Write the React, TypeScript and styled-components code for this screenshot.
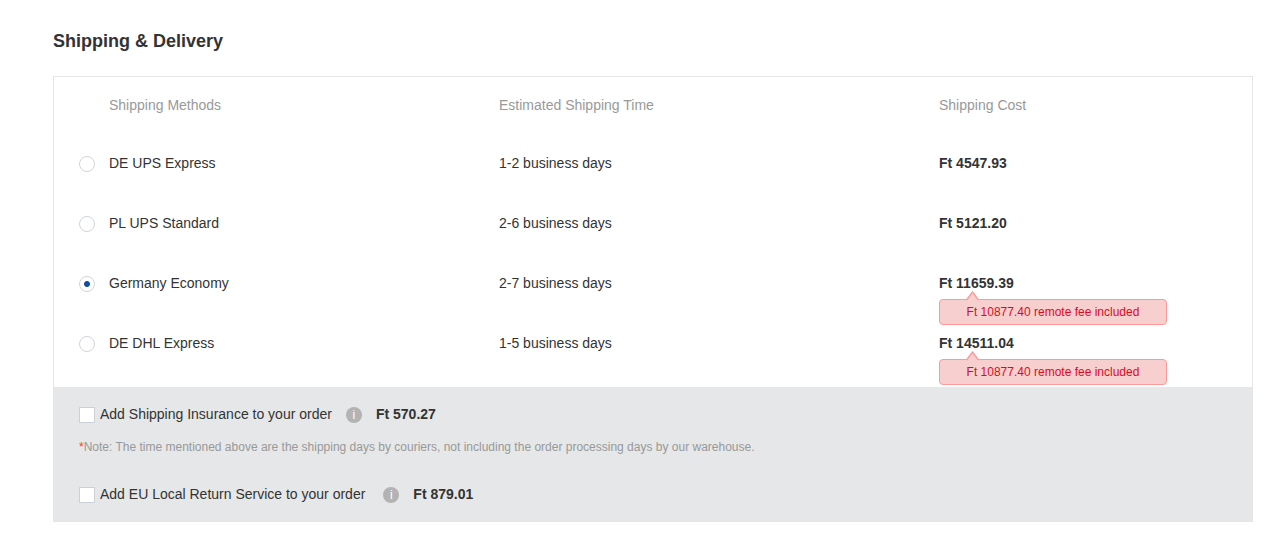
import React, { useState } from 'react';
import styled, { createGlobalStyle } from 'styled-components';

const GlobalStyle = createGlobalStyle`
  *, *::before, *::after { box-sizing: border-box; }
  body {
    margin: 0;
    background: #fff;
    color: #333;
    font: 14px/20px "Liberation Sans", Arial, sans-serif;
  }
`;

const Page = styled.main`
  padding: 30px 28px 18px 53px;
`;

const Title = styled.h2`
  margin: 0 0 24px;
  font-size: 18px;
  line-height: 22px;
  font-weight: bold;
`;

const Panel = styled.section`
  border: 1px solid #e5e6e7;
`;

const Methods = styled.table`
  width: 100%;
  margin-bottom: 14px;
  table-layout: fixed;
  border-collapse: collapse;
`;

const RadioCol = styled.col`
  width: 55px;
`;

const NameCol = styled.col`
  width: 390px;
`;

const TimeCol = styled.col`
  width: 440px;
`;

const HeadCell = styled.th`
  height: 56px;
  padding: 0;
  color: #999;
  font-weight: normal;
  text-align: left;
`;

const Cell = styled.td`
  height: 60px;
  padding: 0;
`;

const RadioCell = styled(Cell)`
  padding: 2px 0 0 25px;
`;

const Radio = styled.input`
  display: block;
  appearance: none;
  width: 16px;
  height: 16px;
  margin: 0;
  border: 1px solid #d0d4da;
  border-radius: 50%;
  background: #fff;

  &:checked {
    background: radial-gradient(circle, #0f50a5 0 2px, #0f50a5 2.5px, #fff 3.5px);
  }
`;

const Cost = styled.div`
  position: relative;
  font-weight: bold;
`;

const FeeNote = styled.div`
  position: absolute;
  z-index: 1;
  top: 26px;
  left: 0;
  width: 228px;
  border: 1px solid #ff9999;
  border-radius: 4px;
  background: #f7cfcf;
  color: #dd0a1e;
  font-size: 12px;
  line-height: 24px;
  font-weight: normal;
  text-align: center;
`;

const FeeArrow = styled.svg`
  position: absolute;
  top: -9px;
  left: 26px;
  display: block;
`;

const Extras = styled.div`
  padding: 17px 25px;
  background: #e5e7e8;
`;

const ExtraRow = styled.div`
  display: flex;
  align-items: center;
`;

const Checkbox = styled.input`
  appearance: none;
  flex: none;
  width: 16px;
  height: 16px;
  margin: 2px 5px 0 0;
  border: 1px solid #ccd0d7;
  background: #fff;

  &:checked {
    background: #0f50a5;
    box-shadow: inset 0 0 0 3px #fff;
  }
`;

const ExtraLabel = styled.label<{ $gap: number }>`
  margin-right: ${({ $gap }) => $gap}px;
`;

const InfoButton = styled.button`
  flex: none;
  width: 16px;
  height: 16px;
  margin: 2px 14px 0 0;
  padding: 0;
  border: 0;
  border-radius: 50%;
  background: #b3b3b3;
  color: #fff;
  font: 12px/16px "Liberation Sans", Arial, sans-serif;
  text-align: center;
`;

const Price = styled.strong`
  font-weight: bold;
`;

const Note = styled.p`
  margin: 13px 0 27px;
  color: #999;
  font-size: 12px;
`;

const Asterisk = styled.span`
  color: #ff3c1e;
`;

interface Method {
  id: string;
  name: string;
  time: string;
  cost: string;
  fee?: string;
}

const methods: Method[] = [
  { id: 'de-ups', name: 'DE UPS Express', time: '1-2 business days', cost: 'Ft 4547.93' },
  { id: 'pl-ups', name: 'PL UPS Standard', time: '2-6 business days', cost: 'Ft 5121.20' },
  { id: 'de-eco', name: 'Germany Economy', time: '2-7 business days', cost: 'Ft 11659.39', fee: 'Ft 10877.40' },
  { id: 'de-dhl', name: 'DE DHL Express', time: '1-5 business days', cost: 'Ft 14511.04', fee: 'Ft 10877.40' },
];

interface ExtraProps {
  id: string;
  label: string;
  price: string;
  gap: number;
}

function Extra({ id, label, price, gap }: ExtraProps) {
  return (
    <ExtraRow>
      <Checkbox type="checkbox" id={id} />
      <ExtraLabel htmlFor={id} $gap={gap}>{label}</ExtraLabel>
      <InfoButton type="button">i</InfoButton>
      <Price>{price}</Price>
    </ExtraRow>
  );
}

export default function App() {
  const [selected, setSelected] = useState('de-eco');

  return (
    <>
      <GlobalStyle />
      <Page>
        <Title>Shipping &amp; Delivery</Title>
        <Panel>
          <Methods>
            <colgroup>
              <RadioCol />
              <NameCol />
              <TimeCol />
              <col />
            </colgroup>
            <thead>
              <tr>
                <HeadCell />
                <HeadCell scope="col">Shipping Methods</HeadCell>
                <HeadCell scope="col">Estimated Shipping Time</HeadCell>
                <HeadCell scope="col">Shipping Cost</HeadCell>
              </tr>
            </thead>
            <tbody>
              {methods.map((m) => (
                <tr key={m.id}>
                  <RadioCell>
                    <Radio
                      type="radio"
                      name="method"
                      id={m.id}
                      checked={selected === m.id}
                      onChange={() => setSelected(m.id)}
                    />
                  </RadioCell>
                  <Cell>
                    <label htmlFor={m.id}>{m.name}</label>
                  </Cell>
                  <Cell>{m.time}</Cell>
                  <Cell>
                    <Cost>
                      {m.cost}
                      {m.fee && (
                        <FeeNote>
                          <FeeArrow width="13" height="10" viewBox="0 0 13 10" aria-hidden="true">
                            <path d="M0.5 9 L6.5 1 L12.5 9 V10 H0.5 Z" fill="#f7cfcf" />
                            <path d="M0.5 9 L6.5 1 L12.5 9" fill="none" stroke="#ff9999" strokeWidth="1.4" />
                          </FeeArrow>
                          {m.fee} remote fee included
                        </FeeNote>
                      )}
                    </Cost>
                  </Cell>
                </tr>
              ))}
            </tbody>
          </Methods>
          <Extras>
            <Extra id="insurance" label="Add Shipping Insurance to your order" price="Ft 570.27" gap={14} />
            <Note>
              <Asterisk>*</Asterisk>Note: The time mentioned above are the shipping days by couriers, not including
              the order processing days by our warehouse.
            </Note>
            <Extra id="eu-return" label="Add EU Local Return Service to your order" price="Ft 879.01" gap={18} />
          </Extras>
        </Panel>
      </Page>
    </>
  );
}
